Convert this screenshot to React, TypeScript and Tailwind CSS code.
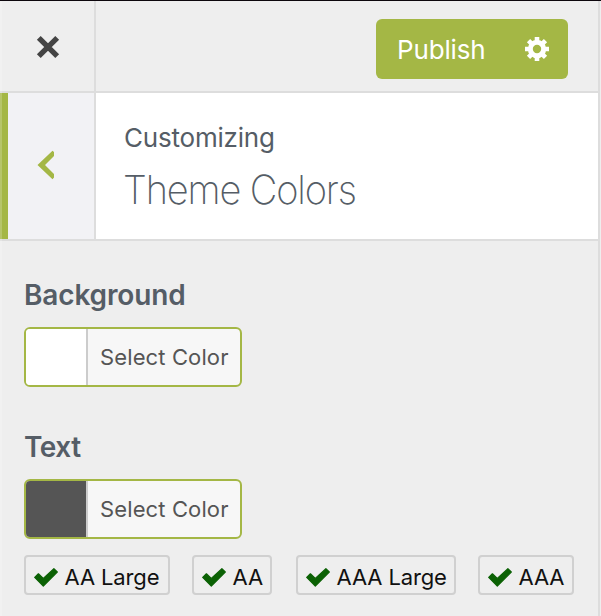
function Check() {
  return (
    <svg className="h-[19px] w-6 shrink-0" viewBox="0 0 24 19" fill="#0b6104" stroke="#0b6104" strokeLinejoin="round">
      <path strokeWidth="1.2" d="M.7 9.4 4.4 5.8 9.3 10.4 19.9.7 23.3 4 9.3 18Z" />
    </svg>
  );
}

function Gear() {
  const teeth = [0, 45, 90, 135];
  return (
    <svg className="size-6" viewBox="0 0 24 24" fill="none" stroke="#fff">
      <circle cx="12" cy="12" r="6.7" strokeWidth="5" />
      {teeth.map((a) => (
        <path key={a} transform={`rotate(${a} 12 12)`} d="M12 0V5M12 19v5" strokeWidth="4.6" />
      ))}
    </svg>
  );
}

function ColorButton({ swatch }: { swatch: string }) {
  return (
    <button className="flex h-[60px] w-[218px] overflow-hidden rounded-[6px] border-2 border-[#a4b745] bg-[#f7f7f7] text-left">
      <span className={`h-full w-[62px] shrink-0 border-r-2 border-[#ccc] box-border ${swatch}`} />
      <span className="pl-3 text-[22px] leading-[56px] tracking-[0.12px] whitespace-nowrap text-[#555]">Select Color</span>
    </button>
  );
}

function Badge({ label, size }: { label: string; size: string }) {
  return (
    <span className={`flex h-10 items-center rounded-[4px] border-2 border-[#d0d0d0] pl-2 ${size}`}>
      <span className="flex pt-1">
        <Check />
      </span>
      <span className="pt-[5px] pl-[6.5px] text-[22px] leading-[33px] tracking-[-0.12px] whitespace-nowrap text-[#111]">{label}</span>
    </span>
  );
}

export default function App() {
  return (
    <div className="relative h-[616px] w-[601px] overflow-hidden border-t border-[#0c060c] bg-[#eee] font-['Inter','Liberation_Sans',sans-serif]">
      <div className="h-full w-[600px] border-r-2 border-[#ddd]">
        <header className="flex h-[92px] border-b-2 border-[#ddd]">
          <button className="w-24 shrink-0 border-r-2 border-[#ddd] pt-0.5 pl-[36px]" aria-label="Close">
            <svg className="size-6" viewBox="0 0 24 24" stroke="#444" strokeWidth="5.4">
              <path d="M2.8 2.8 21.2 21.2M21.2 2.8 2.8 21.2" />
            </svg>
          </button>
          <div className="flex flex-1 justify-end pt-[18px] pr-[30px]">
            <div className="flex h-[60px] w-48 items-center rounded-[6px] bg-[#a4b745] pl-[21px]">
              <span className="w-32 pt-0.5 text-[26px] leading-[60px] tracking-[-0.15px] text-white">Publish</span>
              <Gear />
            </div>
          </div>
        </header>
        <section className="flex h-[148px] border-b-2 border-[#ddd] bg-white">
          <button className="w-24 shrink-0 border-r-2 border-l-8 border-r-[#ddd] border-l-[#a4b745] bg-[#f2f2f5] pb-[3px] pl-[29px]" aria-label="Back">
            <svg className="h-[30px] w-[18px]" viewBox="0 0 18 30" fill="#a4b745">
              <path d="M15.5.7 17 2v4L8 15 17 24v3.5l-1.5 1.8L.5 15Z" />
            </svg>
          </button>
          <div className="pt-[29px] pl-7 text-[#555d66]">
            <div className="text-[26px] leading-8 tracking-[-0.2px]">Customizing</div>
            <h1 className="-ml-px origin-left scale-x-95 pt-3 text-[40px] leading-[48px] font-extralight tracking-[-1.2px] whitespace-nowrap">Theme Colors</h1>
          </div>
        </section>
        <main className="pl-6">
          <h2 className="pt-[37px] text-[28px] leading-[34px] font-semibold tracking-[-0.15px] text-[#555d66]">Background</h2>
          <div className="pt-[15px]">
            <ColorButton swatch="bg-white" />
          </div>
          <h2 className="pt-[43px] text-[28px] leading-[34px] font-semibold tracking-[-0.5px] text-[#555d66]">Text</h2>
          <div className="pt-[15px]">
            <ColorButton swatch="bg-[#555]" />
          </div>
          <div className="flex pt-4">
            <Badge label="AA Large" size="w-[146px] mr-[22px]" />
            <Badge label="AA" size="w-20 mr-6" />
            <Badge label="AAA Large" size="w-40 mr-[22px]" />
            <Badge label="AAA" size="w-24" />
          </div>
        </main>
      </div>
      <div className="absolute inset-y-0 left-0 w-0.5 bg-white/20" />
    </div>
  );
}
